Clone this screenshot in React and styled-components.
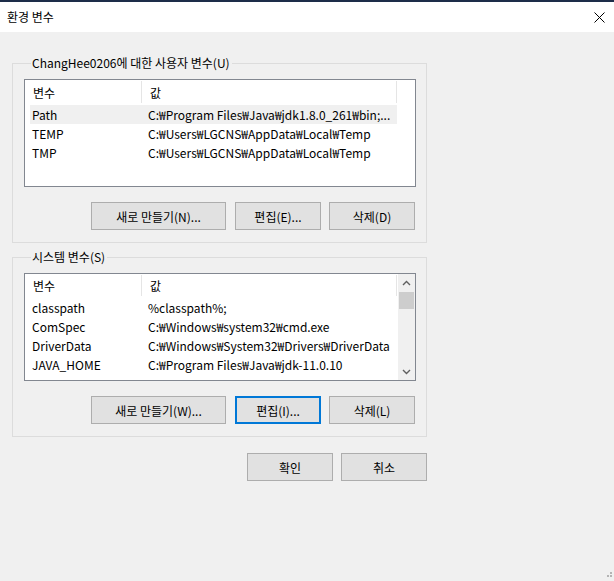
import React from 'react'
import styled, { createGlobalStyle } from 'styled-components'

const GlobalStyle = createGlobalStyle`
  html, body {
    margin: 0;
    padding: 0;
    background: #f0f0f0;
  }
  body {
    font-family: "Noto Sans CJK KR", "Noto Sans", sans-serif;
    font-size: 12px;
    color: #000;
  }
`

const Window = styled.div`
  width: 614px;
  height: 581px;
  display: flex;
  flex-direction: column;
  background: #f0f0f0;
  position: relative;
  overflow: hidden;
  border-top: 2px solid #1d2d49;
  box-sizing: border-box;
`

const TitleBar = styled.div`
  height: 30px;
  background: #fff;
  display: flex;
  align-items: center;
  justify-content: space-between;
  padding: 0 9px 0 7px;
`

const Title = styled.span`
  font-size: 12px;
  line-height: 16px;
`

const Body = styled.div`
  display: flex;
  flex-direction: column;
  padding: 23px 0 0 12px;
  width: 415px;
`

const Group = styled.fieldset`
  margin: 0 0 ${p => p.$after}px 0;
  padding: 8px 10px 12px 11px;
  border: 1px solid #dcdcdc;
  display: flex;
  flex-direction: column;
  min-width: 0;
`

const Legend = styled.legend`
  padding: 0 2px 0 1px;
  margin-left: 7px;
  line-height: 16px;
  color: #000;
`

const ListView = styled.div`
  height: ${p => p.$height}px;
  border: 1px solid #828790;
  background: #fff;
  display: flex;
  box-sizing: border-box;
  overflow: hidden;
`

const ListBody = styled.div`
  flex: 1;
  display: flex;
  flex-direction: column;
`

const HeaderRow = styled.div`
  display: grid;
  grid-template-columns: 117px 255px;
  height: ${p => p.$h}px;
  flex: none;
`

const HeaderCell = styled.div`
  display: flex;
  align-items: center;
  padding-left: 8px;
  border-right: 1px solid #e5e5e5;
  margin: 1px 0 2px;
`

const Row = styled.div`
  display: grid;
  grid-template-columns: 112px 255px;
  height: 19px;
  margin-left: 5px;
  align-items: center;
  background: ${p => (p.$selected ? '#f0f0f0' : 'transparent')};
  width: 367px;
  white-space: nowrap;
`

const Cell = styled.span`
  padding-left: 2px;
  overflow: hidden;
  line-height: 18px;
`

const ValueCell = styled(Cell)`
  padding-left: 6px;
`

const ScrollBar = styled.div`
  width: 17px;
  flex: none;
  background: #f0f0f0;
  display: flex;
  flex-direction: column;
  align-items: stretch;
`

const ScrollArrow = styled.div`
  height: 17px;
  display: flex;
  align-items: center;
  justify-content: center;
`

const ScrollTrack = styled.div`
  flex: 1;
  padding: 1px 1px 0;
`

const ScrollThumb = styled.div`
  height: 17px;
  background: #cdcdcd;
`

const ButtonRow = styled.div`
  display: flex;
  justify-content: flex-end;
  gap: ${p => p.$gap || 8}px;
  margin-top: ${p => p.$top || 0}px;
  margin-right: ${p => p.$right || 0}px;
`

const Button = styled.button`
  width: ${p => p.$w}px;
  height: 28px;
  background: #e1e1e1;
  border: ${p => (p.$focus ? '2px solid #0078d7' : '1px solid #adadad')};
  font-family: inherit;
  font-size: 12px;
  color: #000;
  padding: 0;
  margin: 0;
  box-sizing: border-box;
`

const Grip = styled.svg`
  position: absolute;
  right: 1px;
  bottom: 1px;
`

const CloseIcon = () => (
  <svg width="11" height="11" viewBox="0 0 11 11">
    <path d="M0.5 0.5 L10.5 10.5 M10.5 0.5 L0.5 10.5" stroke="#000" strokeWidth="1" fill="none" />
  </svg>
)

const Chevron = ({ up }) => (
  <svg width="9" height="6" viewBox="0 0 9 6">
    <path
      d={up ? 'M1 5 L4.5 1.5 L8 5' : 'M1 1 L4.5 4.5 L8 1'}
      stroke="#606060"
      strokeWidth="1.4"
      fill="none"
    />
  </svg>
)

const userVars = [
  ['Path', 'C:₩Program Files₩Java₩jdk1.8.0_261₩bin;...'],
  ['TEMP', 'C:₩Users₩LGCNS₩AppData₩Local₩Temp'],
  ['TMP', 'C:₩Users₩LGCNS₩AppData₩Local₩Temp'],
]

const systemVars = [
  ['classpath', '%classpath%;'],
  ['ComSpec', 'C:₩Windows₩system32₩cmd.exe'],
  ['DriverData', 'C:₩Windows₩System32₩Drivers₩DriverData'],
  ['JAVA_HOME', 'C:₩Program Files₩Java₩jdk-11.0.10'],
]

const VarList = ({ rows, height, headerH, scroll, selected }) => (
  <ListView $height={height}>
    <ListBody>
      <HeaderRow $h={headerH}>
        <HeaderCell>변수</HeaderCell>
        <HeaderCell>값</HeaderCell>
      </HeaderRow>
      {rows.map(([name, value], i) => (
        <Row key={name} $selected={i === selected}>
          <Cell>{name}</Cell>
          <ValueCell>{value}</ValueCell>
        </Row>
      ))}
    </ListBody>
    {scroll && (
      <ScrollBar>
        <ScrollArrow>
          <Chevron up />
        </ScrollArrow>
        <ScrollTrack>
          <ScrollThumb />
        </ScrollTrack>
        <ScrollArrow>
          <Chevron />
        </ScrollArrow>
      </ScrollBar>
    )}
  </ListView>
)

export default function App() {
  return (
    <>
      <GlobalStyle />
      <Window>
        <TitleBar>
          <Title>환경 변수</Title>
          <CloseIcon />
        </TitleBar>
        <Body>
          <Group $after={6}>
            <Legend>ChangHee0206에 대한 사용자 변수(U)</Legend>
            <VarList rows={userVars} height={108} headerH={25} selected={0} />
            <ButtonRow $top={15} $right={1}>
              <Button $w={135} style={{ marginRight: 1 }}>새로 만들기(N)...</Button>
              <Button $w={86}>편집(E)...</Button>
              <Button $w={86}>삭제(D)</Button>
            </ButtonRow>
          </Group>
          <Group $after={16}>
            <Legend>시스템 변수(S)</Legend>
            <VarList rows={systemVars} height={108} headerH={24} scroll />
            <ButtonRow $top={15} $right={1}>
              <Button $w={135} style={{ marginRight: 1 }}>새로 만들기(W)...</Button>
              <Button $w={86} $focus>편집(I)...</Button>
              <Button $w={86}>삭제(L)</Button>
            </ButtonRow>
          </Group>
          <ButtonRow>
            <Button $w={86}>확인</Button>
            <Button $w={86}>취소</Button>
          </ButtonRow>
        </Body>
        <Grip width="8" height="8" viewBox="0 0 8 8">
          <rect x="5" y="0" width="2" height="2" fill="#b4b4b4" />
          <rect x="2" y="3" width="2" height="2" fill="#b4b4b4" />
          <rect x="5" y="3" width="2" height="2" fill="#b4b4b4" />
        </Grip>
      </Window>
    </>
  )
}
